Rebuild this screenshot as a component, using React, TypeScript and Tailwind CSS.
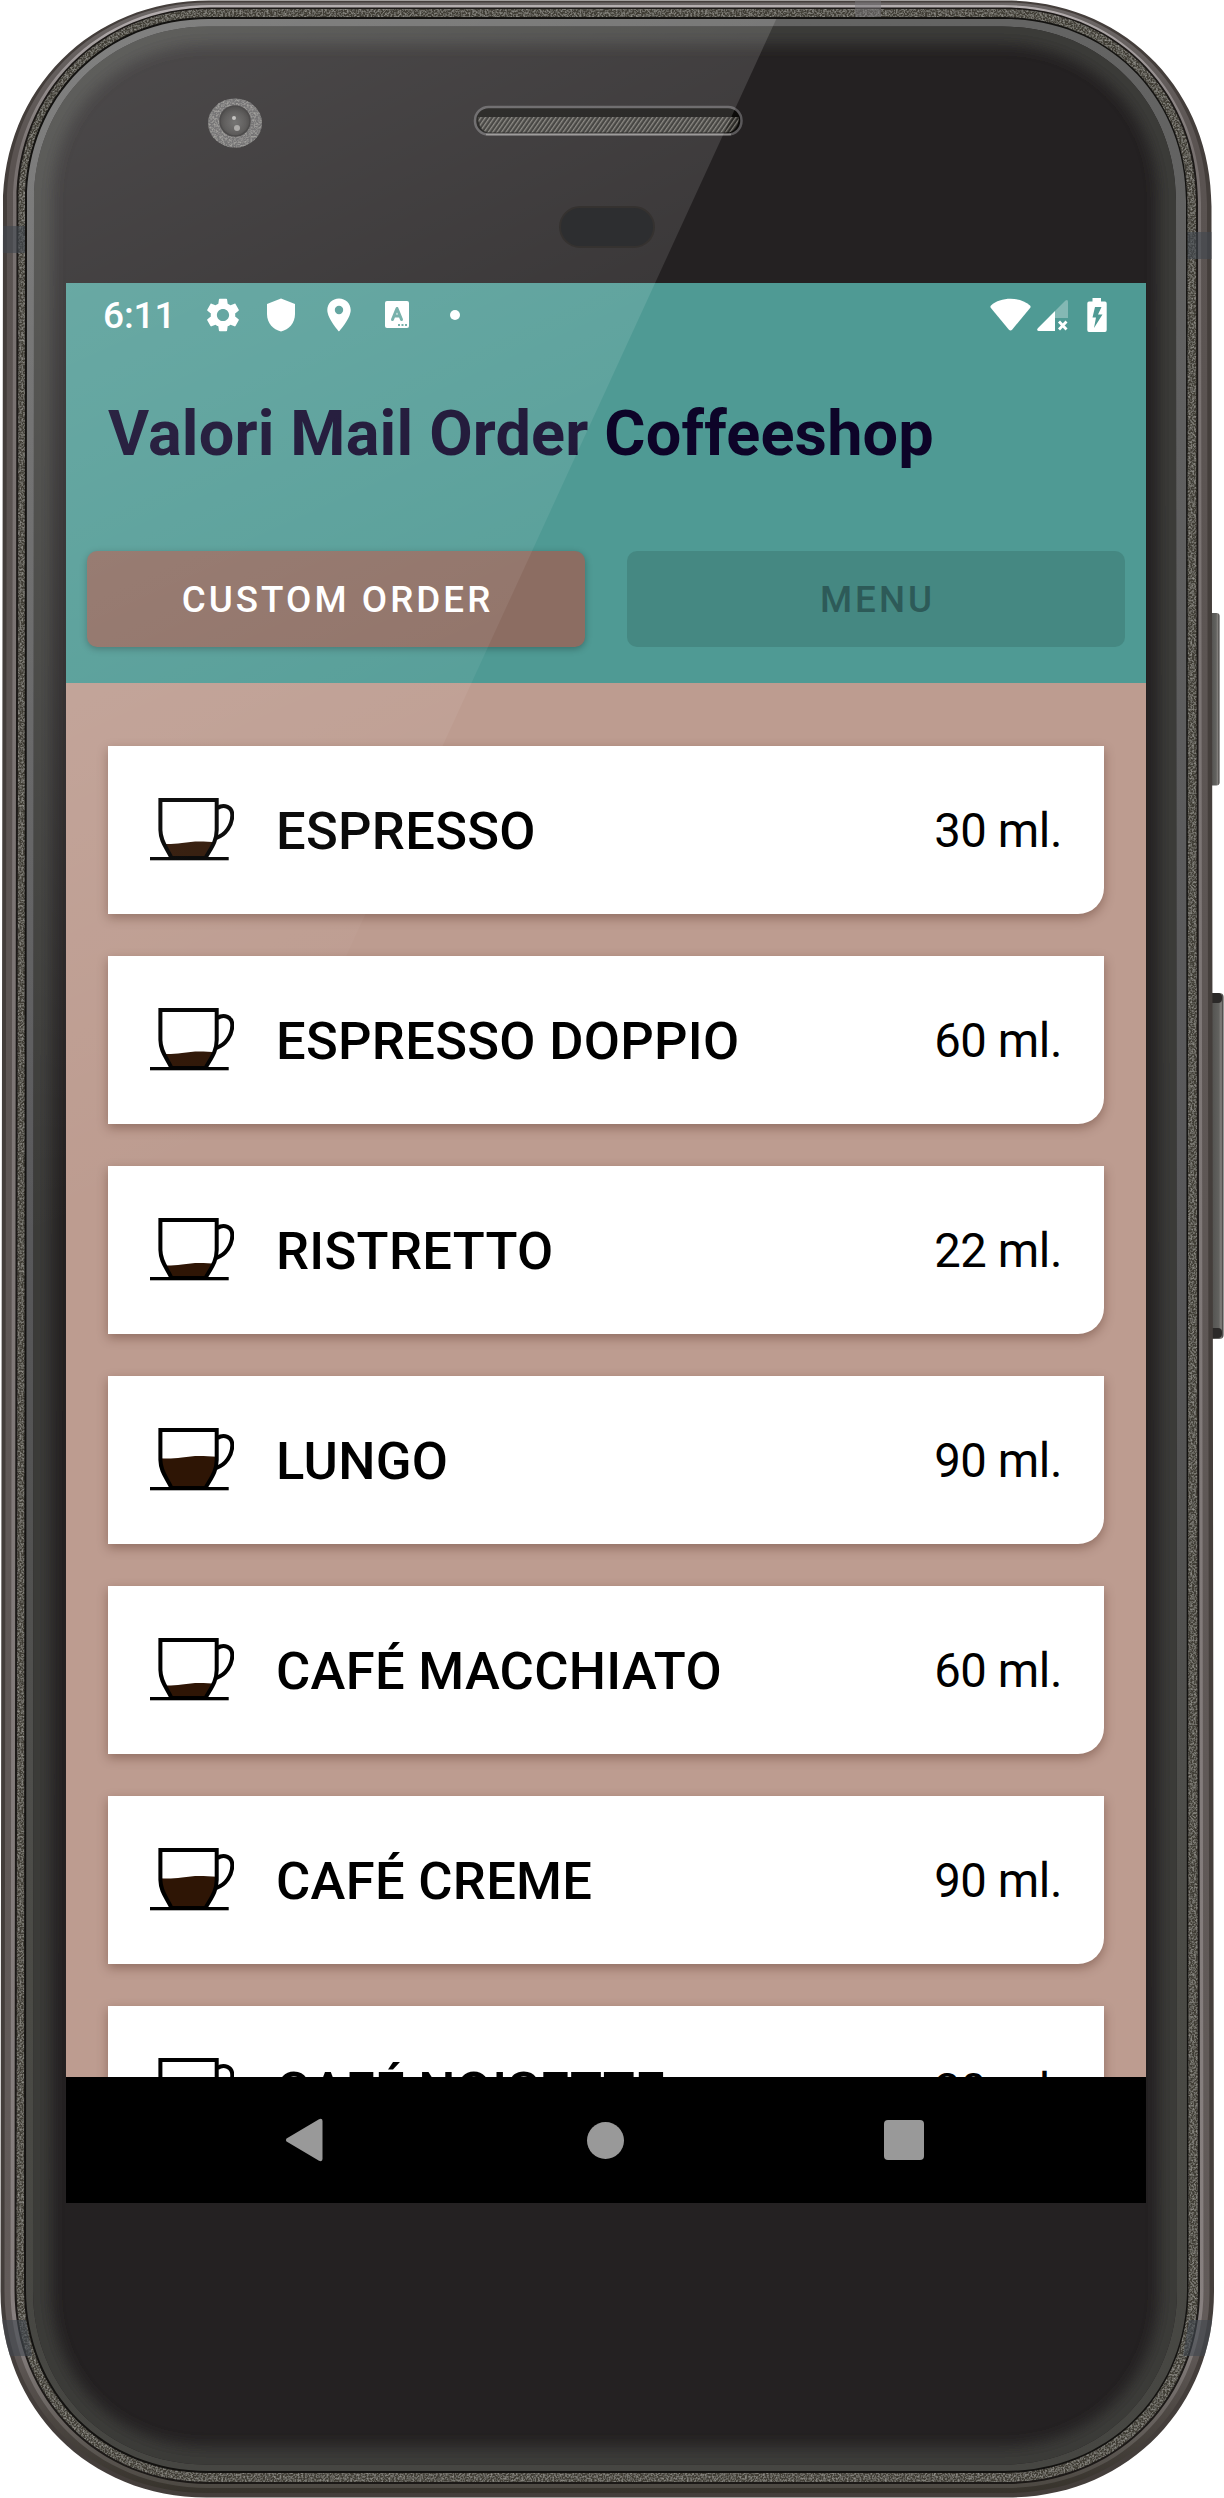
import React from "react";

type Box = { l: number; t: number; r: number; b: number; rad: number; flare: number };

/* Closed outline of the handset; `flare` widens the lower half slightly. */
function outline({ l, t, r, b, rad, flare }: Box): string {
  const k = rad * 0.43;
  const lb = l - flare;
  const rb = r + flare;
  return [
    `M${l + rad} ${t}`,
    `H${r - rad}`,
    `C${r - k} ${t} ${r} ${t + k} ${r} ${t + rad}`,
    `L${rb} ${b - rad}`,
    `C${rb} ${b - k} ${rb - k} ${b} ${rb - rad} ${b}`,
    `H${lb + rad}`,
    `C${lb + k} ${b} ${lb} ${b - k} ${lb} ${b - rad}`,
    `L${l} ${t + rad}`,
    `C${l} ${t + k} ${l + k} ${t} ${l + rad} ${t}`,
    "Z",
  ].join(" ");
}

const BODY = outline({ l: 3, t: 0.5, r: 1211.5, b: 2497.5, rad: 206, flare: 2.5 });
const RIM = outline({ l: 7, t: 2.5, r: 1207, b: 2493, rad: 202, flare: 2.5 });
const SHINE = outline({ l: 13, t: 5, r: 1201, b: 2488, rad: 198, flare: 2.5 });
const GROOVE = outline({ l: 16.5, t: 7.5, r: 1198, b: 2484, rad: 194, flare: 2 });
const BAND = outline({ l: 18.5, t: 9, r: 1196, b: 2482, rad: 192, flare: 2 });
const SEAM = outline({ l: 25, t: 17, r: 1187.5, b: 2473, rad: 184, flare: 1 });
const EDGE = outline({ l: 27, t: 19, r: 1186, b: 2471, rad: 182, flare: 1 });
const GLASS = outline({ l: 34, t: 26.5, r: 1176, b: 2464.5, rad: 174, flare: 1 });

function Handset() {
  return (
    <svg className="absolute inset-0 h-full w-full" viewBox="0 0 1224 2498" aria-hidden="true">
      <defs>
        <linearGradient id="edge" x1="0" y1="0" x2="0" y2="1">
          <stop offset="0" stopColor="#646463" />
          <stop offset="0.5" stopColor="#58585a" />
          <stop offset="0.8" stopColor="#4a4a45" />
          <stop offset="1" stopColor="#464642" />
        </linearGradient>
        <linearGradient id="shine" x1="0" y1="0" x2="0" y2="1">
          <stop offset="0" stopColor="#b5afb0" />
          <stop offset="0.06" stopColor="#77706f" />
          <stop offset="0.94" stopColor="#87807f" />
          <stop offset="1" stopColor="#4c4842" />
        </linearGradient>
        <linearGradient id="rim" x1="0" y1="0" x2="0" y2="1">
          <stop offset="0" stopColor="#6c6766" />
          <stop offset="0.06" stopColor="#5a5351" />
          <stop offset="0.94" stopColor="#625b59" />
          <stop offset="1" stopColor="#37332c" />
        </linearGradient>
        <linearGradient id="button" x1="0" y1="0" x2="1" y2="0">
          <stop offset="0" stopColor="#4b4a48" />
          <stop offset="0.7" stopColor="#62625f" />
          <stop offset="0.85" stopColor="#85827f" />
          <stop offset="1" stopColor="#2d2b2a" />
        </linearGradient>
        <radialGradient id="lens" cx="0.5" cy="0.55" r="0.5">
          <stop offset="0" stopColor="#5c5b5a" />
          <stop offset="0.7" stopColor="#444241" />
          <stop offset="1" stopColor="#333130" />
        </radialGradient>
        <pattern id="mesh" width="3.6" height="3.6" patternUnits="userSpaceOnUse" patternTransform="rotate(35)">
          <rect width="3.6" height="3.6" fill="#2b2a27" />
          <rect width="1.3" height="3.6" fill="#7c7973" />
        </pattern>
        <filter id="soft" x="-5%" y="-5%" width="110%" height="110%">
          <feGaussianBlur stdDeviation="7" />
        </filter>
        <filter id="grain" x="0" y="0" width="100%" height="100%">
          <feTurbulence type="fractalNoise" baseFrequency="0.55" numOctaves="2" seed="4" result="n" />
          <feColorMatrix in="n" type="matrix" values="0 0 0 0 0.5  0 0 0 0 0.49  0 0 0 0 0.45  1.2 0 0 0 -0.48" result="g" />
          <feComposite in="g" in2="SourceGraphic" operator="in" result="s" />
          <feMerge>
            <feMergeNode in="SourceGraphic" />
            <feMergeNode in="s" />
          </feMerge>
        </filter>
        <clipPath id="glassClip">
          <path d={GLASS} />
        </clipPath>
        <clipPath id="bodyClip">
          <path d={BODY} />
        </clipPath>
      </defs>

      <rect x="1208" y="613" width="11.5" height="172.5" rx="3" fill="url(#button)" />
      <rect x="1208" y="993" width="15.5" height="346" rx="4" fill="url(#button)" />
      <rect x="1208" y="993" width="14" height="10" rx="4" fill="#2b2928" />
      <rect x="1208" y="1328" width="14" height="10" rx="4" fill="#2b2928" />

      <path d={BODY} fill="#443e3b" />
      <path d={RIM} fill="url(#rim)" />
      <path d={SHINE} fill="url(#shine)" />
      <path d={GROOVE} fill="#1c1917" />
      <path d={BAND} fill="#3f3c36" filter="url(#grain)" />
      <g clipPath="url(#bodyClip)" fill="#414850" fillOpacity="0.6">
        <rect x="0" y="226" width="26" height="27" />
        <rect x="1187" y="232" width="29" height="27" />
        <rect x="855" y="0" width="26" height="17" fill="#77767a" fillOpacity="0.5" />
        <path d="M0 2320H26L32 2356H0Z" />
        <path d="M1224 2320H1189L1183 2356H1224Z" />
      </g>
      <path d={SEAM} fill="#131210" />
      <path d={EDGE} fill="url(#edge)" />
      <path d={GLASS} fill="#242122" />
      <g clipPath="url(#glassClip)">
        <path d={GLASS} fill="none" stroke="#3b3b38" strokeWidth="36" filter="url(#soft)" />
      </g>

      <ellipse cx="235" cy="123" rx="27" ry="24.5" fill="#5d5c5d" filter="url(#grain)" />
      <circle cx="235" cy="121" r="15" fill="url(#lens)" stroke="#2b2929" strokeWidth="1.5" />
      <circle cx="234" cy="118" r="2" fill="#b9b7b5" />
      <circle cx="237" cy="128" r="3" fill="#9c9a98" />

      <rect x="475" y="107" width="266.5" height="27.5" rx="13.5" fill="#0c0b09" stroke="#5a585a" strokeWidth="2.5" />
      <path d="M478 117H739Q738 132 727 132.5H489Q479 132 478 117Z" fill="url(#mesh)" />
      <path d="M486 134.5H731" stroke="#8f8d8c" strokeWidth="1.5" />
    </svg>
  );
}

function Gloss() {
  return (
    <svg className="pointer-events-none absolute inset-0 h-full w-full" viewBox="0 0 1224 2498" aria-hidden="true">
      <defs>
        <linearGradient id="gloss" gradientUnits="userSpaceOnUse" x1="0" y1="0" x2="471" y2="1046">
          <stop offset="0" stopColor="#fff" stopOpacity="0.195" />
          <stop offset="1" stopColor="#fff" stopOpacity="0" />
        </linearGradient>
        <clipPath id="edgeClip">
          <path d={EDGE} />
        </clipPath>
      </defs>
      <path d="M0 0H785L196 1283H0Z" fill="url(#gloss)" clipPath="url(#edgeClip)" />
      <rect x="560" y="207" width="94" height="40" rx="20" fill="#2d2e30" stroke="#353230" strokeWidth="2" />
    </svg>
  );
}

function StatusBar() {
  return (
    <div className="flex h-[63px] items-center justify-between pr-[39px] pl-[37px] text-white">
      <div className="flex items-center">
        <span className="w-[103px] pt-[1px] text-[37px] leading-none font-medium tracking-[-0.1px]">6:11</span>
        <svg className="h-[34px] w-[34px]" viewBox="2 2 20 20" fill="currentColor">
          <path d="M19.14 12.94c.04-.3.06-.61.06-.94 0-.32-.02-.64-.07-.94l2.03-1.58c.18-.14.23-.41.12-.61l-1.92-3.32c-.12-.22-.37-.29-.59-.22l-2.39.96c-.5-.38-1.03-.7-1.62-.94l-.36-2.54c-.04-.24-.24-.41-.48-.41h-3.84c-.24 0-.43.17-.47.41l-.36 2.54c-.59.24-1.13.57-1.62.94l-2.39-.96c-.22-.08-.47 0-.59.22L2.74 8.87c-.12.21-.08.47.12.61l2.03 1.58c-.05.3-.09.63-.09.94s.02.64.07.94l-2.03 1.58c-.18.14-.23.41-.12.61l1.92 3.32c.12.22.37.29.59.22l2.39-.96c.5.38 1.03.7 1.62.94l.36 2.54c.05.24.24.41.48.41h3.84c.24 0 .44-.17.47-.41l.36-2.54c.59-.24 1.13-.56 1.62-.94l2.39.96c.22.08.47 0 .59-.22l1.92-3.32c.12-.22.07-.47-.12-.61l-2.01-1.58zM12 15.6c-1.98 0-3.6-1.62-3.6-3.6s1.62-3.6 3.6-3.6 3.6 1.62 3.6 3.6-1.62 3.6-3.6 3.6z" />
        </svg>
        <svg className="ml-[27px] h-[34px] w-[28px]" viewBox="0 0 28 34" fill="currentColor">
          <path d="M14 .5L28 6V16C28 25 22 31.5 14 33.500C6 31.5 0 25 0 16V6Z" />
        </svg>
        <svg className="ml-[32px] h-[34px] w-[24px]" viewBox="0 0 24 34" fill="currentColor">
          <path fillRule="evenodd" d="M12 .5C5.4 .5 .3 5.6 .3 12C.3 20.5 12 33.5 12 33.5S23.7 20.5 23.7 12C23.7 5.6 18.6 .5 12 .5ZM12 7.800A4.2 4.2 0 1 1 12 16.2A4.2 4.2 0 0 1 12 7.800Z" />
        </svg>
        <svg className="ml-[34px] h-[27px] w-[24px]" viewBox="0 0 24 27">
          <rect width="24" height="27" rx="2" fill="#fff" />
          <g fill="none" stroke="#66a7a0" strokeWidth="3" strokeLinecap="round" strokeLinejoin="round">
            <path d="M7.5 18.500L12 7.5L16.5 18.500M9 15H15" />
          </g>
          <path d="M13 23h2v2h-2zM16.500 23h2v2h-2zM20 23h2v2h-2z" fill="#66a7a0" />
        </svg>
        <span className="ml-[41px] h-[10px] w-[10px] rounded-full bg-white" />
      </div>
      <div className="flex items-center">
        <svg className="h-[34px] w-[41px]" viewBox="0 0 41 34">
          <path d="M1 7.5C6 3 13 .8 20.5 .8S35 3 40 7.5Q41 8.500 40.3 9.700L22.3 31.5Q20.5 33.5 18.7 31.5L.7 9.700Q0 8.500 1 7.500Z" fill="#fff" />
        </svg>
        <svg className="ml-[6px] h-[34px] w-[31px]" viewBox="0 0 31 34">
          <path d="M18 13L28.500 2.500Q31 1 31 4V20H18Z" fill="#fff" fillOpacity="0.3" />
          <path d="M18 13V33H1.500Q-.7 32.500 .6 30.500Z" fill="#fff" />
          <path d="M22 23.500L29.500 31.500M29.500 23.500L22 31.500" stroke="#fff" strokeWidth="2.800" />
        </svg>
        <svg className="ml-[19px] h-[34px] w-[20px]" viewBox="0 0 20 34">
          <path fillRule="evenodd" d="M5.500 0H14V3.500H18Q19.700 3.500 19.700 5.500V32Q19.700 34 18 34H2Q.3 34 .3 32V5.500Q.3 3.500 2 3.500H5.500ZM8 9L5.500 19.500H9L7 30L15.500 16.500H11L14.500 9Z" fill="#fff" />
        </svg>
      </div>
    </div>
  );
}

function Cup({ level }: { level: number }) {
  return (
    <svg className="h-[84px] w-[84px] shrink-0" viewBox="0 0 84 84" aria-hidden="true">
      <defs>
        <clipPath id={`cup-${level}`}>
          <path d="M10.400 12V42C10.600 54 17 60 22 70H56C61 60 66.500 54 66.700 42V12Z" />
        </clipPath>
      </defs>
      <path
        d={`M0 ${level}C12 ${level + 1} 20 ${level + 1.5} 32 ${level}C46 ${level - 2.5} 56 ${level - 2} 84 ${level + 1}V84H0Z`}
        fill="#2e1505"
        clipPath={`url(#cup-${level})`}
      />
      <path d="M10.400 12H66.700V42C66.500 54 61 60 55.500 70H21.500C17 60 10.600 54 10.400 42Z" fill="none" stroke="#000" strokeWidth="4" />
      <path d="M67.500 20C74 15.500 82.500 19 82.300 27.500C82 37 76 47 66 50" fill="none" stroke="#000" strokeWidth="4" />
      <rect x="0" y="69" width="78.700" height="3.300" fill="#000" />
    </svg>
  );
}

const DRINKS = [
  { name: "ESPRESSO", volume: "30 ml.", level: 55 },
  { name: "ESPRESSO DOPPIO", volume: "60 ml.", level: 55 },
  { name: "RISTRETTO", volume: "22 ml.", level: 56.5 },
  { name: "LUNGO", volume: "90 ml.", level: 39.5 },
  { name: "CAFÉ MACCHIATO", volume: "60 ml.", level: 56.5 },
  { name: "CAFÉ CREME", volume: "90 ml.", level: 39.5 },
  { name: "CAFÉ NOISETTE", volume: "30 ml.", level: 56.5 },
];

function DrinkCard({ name, volume, level }: (typeof DRINKS)[number]) {
  return (
    <li className="flex h-[168px] shrink-0 items-center rounded-br-[26px] bg-white px-[42px] text-black shadow-[0_4px_11px_rgba(60,20,10,0.34)]">
      <Cup level={level} />
      <span className="ml-[42px] flex-1 pt-[3px] text-[52.5px] leading-none font-medium tracking-[0.3px] whitespace-nowrap">
        {name}
      </span>
      <span className="pt-[4px] text-[47.25px] leading-none tracking-[-0.4px] whitespace-nowrap">{volume}</span>
    </li>
  );
}

function NavBar() {
  return (
    <nav className="flex h-[126px] shrink-0 items-center bg-black pl-[219px]">
      <svg className="h-[44px] w-[38px]" viewBox="0 0 38 44" fill="#999">
        <path d="M1.500 20.500L34 1.200Q37.500 0 37.500 3V41Q37.500 44 34 42.800L1.500 23.500Q.2 22 1.500 20.500Z" />
      </svg>
      <span className="ml-[264px] h-[37px] w-[37px] rounded-full bg-[#999]" />
      <span className="ml-[260px] h-[40px] w-[40px] rounded-[4px] bg-[#999]" />
    </nav>
  );
}

export default function App() {
  return (
    <div className="relative h-[2498px] w-[1224px] overflow-hidden bg-white font-['Roboto',sans-serif]">
      <Handset />
      <div className="relative pt-[283px] pl-[66px]">
        <main className="flex h-[1920px] w-[1080px] flex-col overflow-hidden bg-[#bd9c90]">
          <header className="flex h-[400px] shrink-0 flex-col bg-[#4f9a94]">
            <StatusBar />
            <h1 className="flex h-[174px] items-center px-[42px] text-[63px] leading-none font-bold tracking-[0.18px] text-[#0d0428]">
              Valori Mail Order Coffeeshop
            </h1>
            <div className="mt-[31px] flex gap-[42px] px-[21px]">
              <button className="h-[96px] flex-1 rounded-[10px] bg-[#8c6d62] pt-[3px] pl-[3px] text-[36.75px] leading-none font-medium tracking-[3.05px] text-white shadow-[0_2px_7px_rgba(0,0,0,0.28)]">
                CUSTOM ORDER
              </button>
              <button disabled className="h-[96px] flex-1 rounded-[10px] bg-[#458882] pt-[3px] pl-[3px] text-[36.75px] leading-none font-medium tracking-[3.05px] text-[#2d5a58]">
                MENU
              </button>
            </div>
          </header>
          <ul className="flex min-h-0 flex-1 flex-col gap-[42px] overflow-hidden px-[42px] pt-[63px]">
            {DRINKS.map((drink) => (
              <DrinkCard key={drink.name} {...drink} />
            ))}
          </ul>
          <NavBar />
        </main>
      </div>
      <Gloss />
    </div>
  );
}
